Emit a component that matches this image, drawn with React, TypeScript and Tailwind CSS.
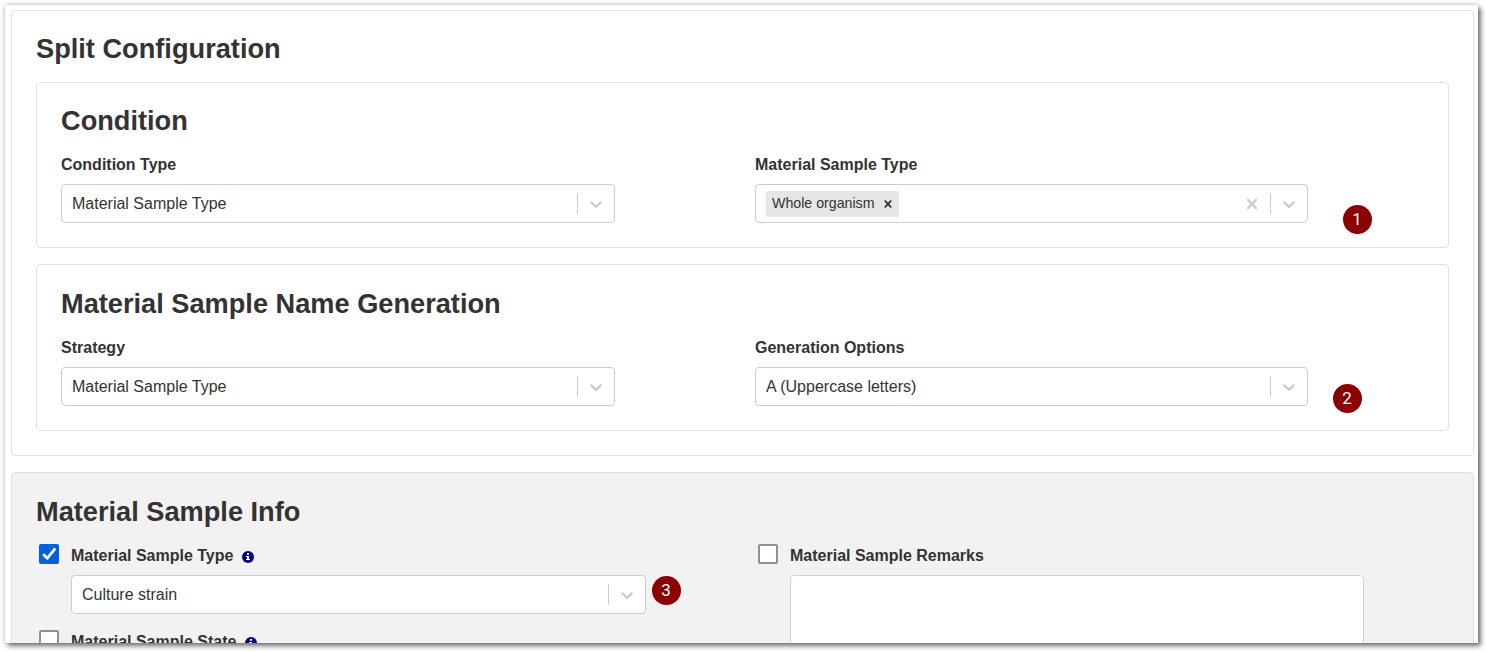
import type { ReactNode } from "react";

const CHEVRON =
  "M4.516 7.548c0.436-0.446 1.043-0.481 1.576 0l3.908 3.747 3.908-3.747c0.533-0.481 1.141-0.446 1.574 0 0.436 0.445 0.408 1.197 0 1.615-0.406 0.418-4.695 4.502-4.695 4.502-0.217 0.223-0.502 0.335-0.787 0.335s-0.57-0.112-0.789-0.335c0 0-4.287-4.084-4.695-4.502s-0.436-1.17 0-1.615z";
const CROSS =
  "M14.348 14.849c-0.469 0.469-1.229 0.469-1.697 0l-2.651-3.030-2.651 3.029c-0.469 0.469-1.229 0.469-1.697 0-0.469-0.469-0.469-1.229 0-1.697l2.758-3.15-2.759-3.152c-0.469-0.469-0.469-1.228 0-1.697s1.228-0.469 1.697 0l2.652 3.031 2.651-3.031c0.469-0.469 1.228-0.469 1.697 0s0.469 1.229 0 1.697l-2.758 3.152 2.758 3.15c0.469 0.469 0.469 1.229 0 1.698z";

function Glyph({ d, className }: { d: string; className: string }) {
  return (
    <svg viewBox="0 0 20 20" fill="currentColor" className={className}>
      <path d={d} />
    </svg>
  );
}

function Heading({ children }: { children: ReactNode }) {
  return <h2 className="h-[34px] text-[27.2px] leading-[34px] font-bold whitespace-nowrap">{children}</h2>;
}

function Label({ children }: { children: ReactNode }) {
  return <div className="h-6 text-base leading-[26px] font-bold whitespace-nowrap">{children}</div>;
}

function Select({ children, clearable = false }: { children: ReactNode; clearable?: boolean }) {
  return (
    <div className="flex h-[39px] w-full items-center rounded border border-[#cccccc] bg-white">
      <div className="flex flex-1 items-center pl-[10px] leading-6 whitespace-nowrap">{children}</div>
      <div className="flex items-center self-stretch text-[#cccccc]">
        {clearable && <Glyph d={CROSS} className="mx-2 size-5 scale-x-110" />}
        <span className="my-2 w-px self-stretch bg-[#cccccc]" />
        <Glyph d={CHEVRON} className="mx-2 mt-px size-5" />
      </div>
    </div>
  );
}

function Fields({ left, right }: { left: ReactNode; right: ReactNode }) {
  return (
    <div className="mt-[14px] flex gap-[140px]">
      <div className="flex w-[554px] flex-col gap-2">{left}</div>
      <div className="flex w-[553px] flex-col gap-2">{right}</div>
    </div>
  );
}

function Checkbox({ checked = false }: { checked?: boolean }) {
  return checked ? (
    <span className="mt-px flex size-5 shrink-0 rounded-[2px] bg-[#0060df]">
      <svg viewBox="0 0 20 20" className="size-5" fill="none" stroke="white" strokeWidth="2.8" strokeLinecap="round" strokeLinejoin="round">
        <path d="M4.9 10.9l3.4 3.3 7.2-8.9" />
      </svg>
    </span>
  ) : (
    <span className="mt-px size-5 shrink-0 rounded-[2px] border-2 border-[#8f8f9d] bg-white" />
  );
}

function Info() {
  return (
    <svg viewBox="0 0 12 12" className="mt-2 ml-[9px] size-3">
      <circle cx="6" cy="6" r="6" fill="#000080" />
      <path d="M5 2h2v1.8H5zM4 5H7v3h1v1H4V8h1V6H4z" fill="white" />
    </svg>
  );
}

function Badge({ children, className }: { children: ReactNode; className: string }) {
  return (
    <span
      className={`absolute flex size-[29.5px] items-center justify-center rounded-full bg-[#8b0000] pt-px pr-px font-[Roboto,sans-serif] text-[17px] leading-none text-white ${className}`}
    >
      {children}
    </span>
  );
}

export default function App() {
  return (
    <div className="relative h-[652px] w-[1487px] overflow-hidden bg-white pt-[5px] pl-[5px] font-['Liberation_Sans',Arial,sans-serif] text-base text-[#333333]">
      <main className="flex h-[638px] w-[1473px] flex-col shadow-[3px_3px_5px_0px_rgba(0,0,0,0.5),0px_0px_5px_0px_rgba(0,0,0,0.25)]">
        <div className="flex h-full flex-col gap-4 overflow-hidden bg-white pt-[5px] pr-1 pl-[6px]">
          <section className="h-[446px] shrink-0 rounded border border-[#dee2e6] px-6 pt-[21px]">
            <Heading>Split Configuration</Heading>
            <div className="mt-4 h-[166px] rounded border border-[#dee2e6] px-6 pt-[21px]">
              <Heading>Condition</Heading>
              <Fields
                left={
                  <>
                    <Label>Condition Type</Label>
                    <Select>Material Sample Type</Select>
                  </>
                }
                right={
                  <>
                    <Label>Material Sample Type</Label>
                    <Select clearable>
                      <span className="flex h-[26px] items-center rounded-[2px] bg-[#e6e6e6] pl-[6px] text-[14.2px]">
                        <span className="w-[105px] pb-0.5">Whole organism</span>
                        <Glyph d={CROSS} className="mx-1 size-[14px] scale-x-110 text-[#333333]" />
                      </span>
                    </Select>
                  </>
                }
              />
            </div>
            <div className="mt-4 h-[167px] rounded border border-[#dee2e6] px-6 pt-[22px]">
              <Heading>Material Sample Name Generation</Heading>
              <Fields
                left={
                  <>
                    <Label>Strategy</Label>
                    <Select>Material Sample Type</Select>
                  </>
                }
                right={
                  <>
                    <Label>Generation Options</Label>
                    <Select>A (Uppercase letters)</Select>
                  </>
                }
              />
            </div>
          </section>

          <section className="h-[300px] shrink-0 rounded border border-[#dee2e6] bg-[#f2f2f2] px-6 pt-[22px]">
            <Heading>Material Sample Info</Heading>
            <div className="mt-[14px] flex">
              <div className="w-[719px] pl-[3px]">
                <div className="flex">
                  <Checkbox checked />
                  <div className="ml-3 flex">
                    <Label>Material Sample Type</Label>
                    <Info />
                  </div>
                </div>
                <div className="mt-2 ml-8 w-[575px]">
                  <Select>Culture strain</Select>
                </div>
                <div className="mt-[15px] flex">
                  <Checkbox />
                  <div className="ml-3 flex">
                    <Label>Material Sample State</Label>
                    <Info />
                  </div>
                </div>
              </div>
              <div className="pl-[3px]">
                <div className="flex gap-3">
                  <Checkbox />
                  <Label>Material Sample Remarks</Label>
                </div>
                <div className="mt-2 ml-8 h-[120px] w-[574px] rounded border border-[#ced4da] bg-white" />
              </div>
            </div>
          </section>
        </div>
      </main>
      <Badge className="top-[204.6px] left-[1342.7px]">1</Badge>
      <Badge className="top-[383.6px] left-[1332.7px]">2</Badge>
      <Badge className="top-[575.6px] left-[651.7px]">3</Badge>
    </div>
  );
}
